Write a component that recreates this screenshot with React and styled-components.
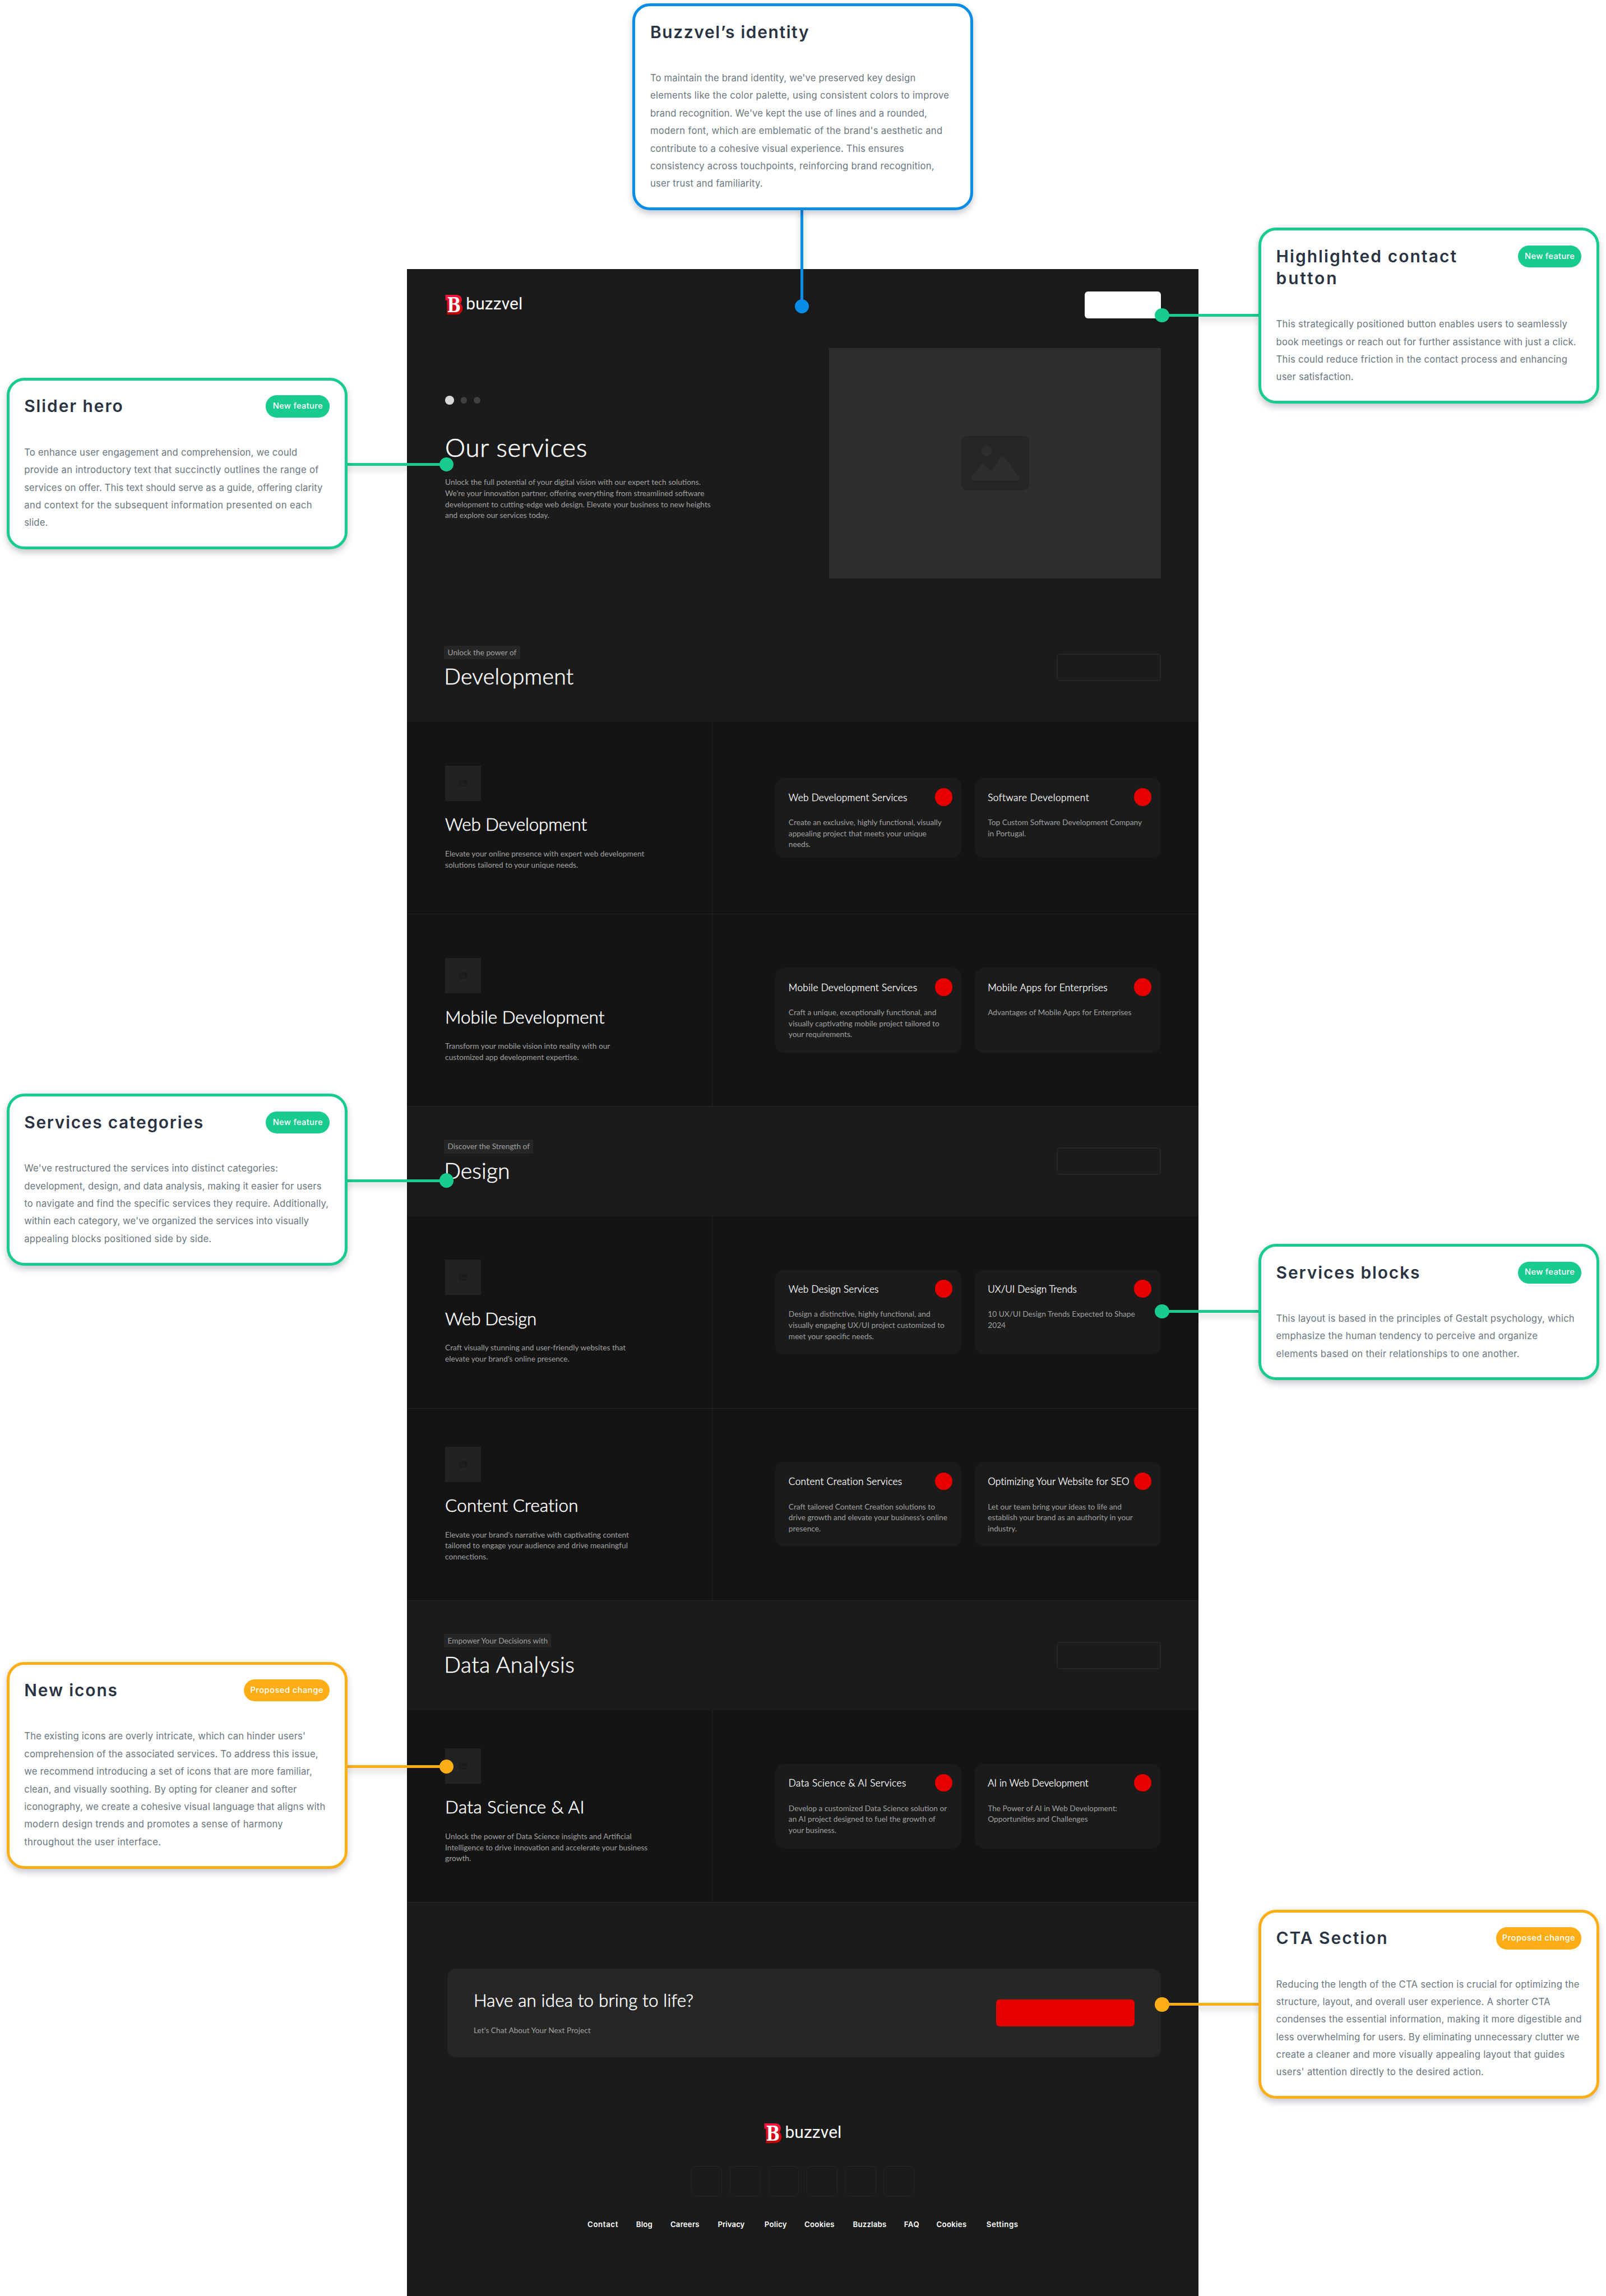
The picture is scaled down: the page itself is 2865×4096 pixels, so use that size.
import React, { useLayoutEffect, useRef } from "react";
import styled, { createGlobalStyle } from "styled-components";

const SCALE = 0.9804;
const u = (n) => `${+(n * SCALE).toFixed(3)}px`;

const ui = `Inter, "Open Sans", sans-serif`;
const body = `Lato, Carlito, "Open Sans", sans-serif`;

const GlobalStyle = createGlobalStyle`
  *, *::before, *::after { box-sizing: border-box; }
  body { margin: 0; background: #fff; font-family: ${body}; overflow: hidden; }
  h1, h2, h3, h4, p { margin: 0; font-weight: inherit; }
`;

/* One line of text, tracked so that it sets to the given measure. */
const LineBox = styled.span`
  display: block;
  width: max-content;
  white-space: nowrap;
`;

function Line({ w, children }) {
  const ref = useRef(null);
  useLayoutEffect(() => {
    const el = ref.current;
    el.style.letterSpacing = "0px";
    const natural = el.getBoundingClientRect().width;
    const count = el.textContent.length;
    el.style.letterSpacing = `${(w * SCALE - natural) / count}px`;
  }, [w, children]);
  return <LineBox ref={ref}>{children}</LineBox>;
}

const Lines = ({ of }) => of.map(([text, w]) => <Line key={text} w={w}>{text}</Line>);

const Canvas = styled.main`
  position: relative;
  width: ${u(2922)};
  height: ${u(4178)};
  padding: ${u(490)} 0 0 ${u(741)};
  overflow: hidden;
`;

const Page = styled.div`
  width: ${u(1440)};
  height: ${u(3700)};
  background: #1b1b1b;
  color: #fff;
`;

const Nav = styled.header`
  display: flex;
  align-items: center;
  justify-content: space-between;
  height: ${u(49)};
  margin: 0 ${u(69)};
`;

const NavSpace = styled.div`
  padding-top: ${u(40)};
`;

const Button = styled.div`
  flex: none;
  width: ${(p) => u(p.$w)};
  height: ${(p) => u(p.$h || 49)};
  border-radius: ${u(6)};
  background: ${(p) => p.$bg || "transparent"};
  border: ${(p) => (p.$outline ? "2px solid #262626" : "none")};
`;

const LogoBox = styled.div`
  display: flex;
  align-items: center;
  gap: ${u(5)};
  height: ${u(36)};
`;

const LogoMark = styled.svg`
  width: ${u(33)};
  height: ${u(36)};
  overflow: visible;
`;

const LogoText = styled.span`
  padding-bottom: ${u(4.5)};
  font: 400 ${u(30.5)}/${u(38)} Roboto, sans-serif;
  color: #fff;
`;

function Logo() {
  return (
    <LogoBox>
      <LogoMark viewBox="0 0 33 36">
        <defs>
          <linearGradient id="mark" x1="0" y1="0" x2="0" y2="1">
            <stop offset="0" stopColor="#f5153f" />
            <stop offset="1" stopColor="#c00000" />
          </linearGradient>
        </defs>
        <path d="M.5 0H20c7 0 10.500 4 10.500 8.500 0 3-1 5.500-2.500 7.500 2.500 2 4 5 4 8.500C32 31 27 36 20 36H3.500V10H.5z" fill="url(#mark)" />
        <text x="3.6" y="31.5" fontFamily="DejaVu Serif" fontWeight="700" fontSize="38" textLength="25" lengthAdjust="spacingAndGlyphs" fill="#fff">B</text>
      </LogoMark>
      <LogoText><Line w={103}>buzzvel</Line></LogoText>
    </LogoBox>
  );
}

const Hero = styled.section`
  display: flex;
  justify-content: space-between;
  margin: ${u(54.4)} ${u(69)} ${u(62.6)};
  height: ${u(419)};
`;

const HeroCopy = styled.div`
  padding-top: ${u(87)};
`;

const Dots = styled.div`
  display: flex;
  align-items: center;
  gap: ${u(12)};
  height: ${u(16)};
`;

const Dot = styled.i`
  width: ${(p) => u(p.$active ? 16 : 12)};
  height: ${(p) => u(p.$active ? 16 : 12)};
  border-radius: 50%;
  background: ${(p) => (p.$active ? "#d9d9d9" : "#404040")};
`;

const HeroTitle = styled.h1`
  margin: ${u(49.6)} 0 ${u(25.5)};
  font: 300 ${u(46.5)}/${u(56)} ${body};
  -webkit-text-stroke: 0.7px #fff;
`;

const Copy = styled.p`
  font: 400 ${u(14)}/${u(20)} ${body};
  color: #a0a0a0;
  white-space: pre-line;
`;

const Placeholder = styled.div`
  display: flex;
  align-items: center;
  justify-content: center;
  flex: none;
  width: ${(p) => u(p.$w)};
  height: ${(p) => u(p.$h)};
  background: ${(p) => p.$bg};
  color: ${(p) => p.$ink};
`;

const Picture = styled.svg`
  width: ${(p) => u(p.$w)};
  height: auto;
`;

function ImagePlaceholder({ w, h, bg, ink, icon }) {
  return (
    <Placeholder $w={w} $h={h} $bg={bg} $ink={ink}>
      <Picture $w={icon} viewBox="0 0 125 100">
        <rect width="125" height="100" rx="13" fill="currentColor" />
        <circle cx="47" cy="28.5" r="9.5" fill={bg} />
        <path d="M19 75.500 38.500 51.500q1.800-2 3.600 0L52.500 62.500q2 2 4 0L74.500 38.500q2-2 4 0L106 75v4.500q0 2-2 2H20.500q-2 0-2-2z" fill={bg} />
      </Picture>
    </Placeholder>
  );
}

const SectionHead = styled.section`
  display: flex;
  align-items: center;
  justify-content: space-between;
  height: ${u(199)};
  padding: 0 ${u(69)} 0 ${u(67)};
`;

const Tag = styled.span`
  display: block;
  width: max-content;
  padding: 0 ${u(6.5)};
  background: #262626;
  color: #a0a0a0;
  font: 400 ${u(14)}/${u(25)} ${body};
`;

const SectionTitle = styled.h2`
  margin-top: ${u(6)};
  font: 300 ${u(40)}/${u(48)} ${body};
  -webkit-text-stroke: 0.6px #fff;
`;

const Row = styled.section`
  display: flex;
  height: ${u(350)};
  background: #141414;
  border-bottom: 1px solid #262626;
`;

const Service = styled.div`
  display: flex;
  flex-direction: column;
  justify-content: center;
  gap: ${u(24)};
  width: ${u(556)};
  padding-left: ${u(69)};
  border-right: 2px solid #1b1b1b;
`;

const ServiceTitle = styled.h3`
  font: 300 ${u(32)}/${u(38)} ${body};
  -webkit-text-stroke: 0.6px #fff;
`;

const Cards = styled.div`
  display: flex;
  align-items: center;
  gap: ${u(24)};
  padding-left: ${u(114)};
`;

const Card = styled.article`
  position: relative;
  width: ${u(338.5)};
  height: ${(p) => u(p.$h)};
  padding: ${u(24)};
  border-radius: ${u(16)};
  background: #1b1b1b;
`;

const CardTitle = styled.h4`
  margin-bottom: ${u(24.5)};
  font: 300 ${u(17.5)}/${u(22)} ${body};
  -webkit-text-stroke: 0.35px #fff;
`;

const Bullet = styled.i`
  position: absolute;
  top: ${u(18.5)};
  right: ${u(16.5)};
  width: ${u(32)};
  height: ${u(32)};
  border-radius: 50%;
  background: #e60000;
`;

const Cta = styled.section`
  display: flex;
  align-items: center;
  justify-content: space-between;
  height: ${u(162)};
  margin: ${u(120)} ${u(69)} ${u(120)} ${u(73)};
  padding: 0 ${u(48)};
  border-radius: ${u(16)};
  background: #262626;
`;

const CtaTitle = styled.h3`
  margin-bottom: ${u(25)};
  font: 300 ${u(32)}/${u(38)} ${body};
  -webkit-text-stroke: 0.6px #fff;
`;

const Footer = styled.footer`
  display: flex;
  flex-direction: column;
  align-items: center;
  gap: ${u(41)};
`;

const Socials = styled.div`
  display: flex;
  gap: ${u(14)};
`;

const Social = styled.i`
  width: ${u(56)};
  height: ${u(56)};
  border: 1px solid #262626;
  border-radius: ${u(8)};
`;

const Links = styled.nav`
  display: grid;
  grid-template-columns: ${[88.4, 62.4, 86.2, 85, 72.7, 88.3, 93, 59, 91, 58].map(u).join(" ")};
  font: 600 ${u(13.5)}/${u(20)} ${ui};
`;

/* Notes pinned over the page */
const Note = styled.aside`
  position: absolute;
  left: ${(p) => u(p.$x)};
  top: ${(p) => u(p.$y)};
  width: ${u(620)};
  padding: ${u(27)};
  border: 5px solid ${(p) => p.$color};
  border-radius: ${u(32)};
  background: #fff;
  box-shadow: 0 ${u(6)} ${u(12)} rgba(20, 30, 50, 0.24);
`;

const NoteHead = styled.div`
  display: flex;
  align-items: flex-start;
  justify-content: space-between;
  margin-bottom: ${u(48)};
`;

const NoteTitle = styled.h2`
  font: 600 ${u(30.5)}/${u(40)} ${ui};
  color: #2a3342;
`;

const NoteBody = styled.p`
  font: 400 ${u(17)}/${u(32)} ${ui};
  color: #6b7780;
`;

const Badge = styled.span`
  display: flex;
  align-items: center;
  justify-content: center;
  width: ${(p) => u(p.$w)};
  height: ${u(40)};
  border-radius: ${u(20)};
  background: ${(p) => p.$color};
  color: #fff;
  font: 500 ${u(15)}/${u(20)} ${ui};
`;

const Lead = styled.i`
  position: absolute;
  left: ${(p) => u(p.$x)};
  top: ${(p) => u(p.$y)};
  width: ${(p) => u(p.$w)};
  height: ${(p) => u(p.$h)};
  background: ${(p) => p.$color};
  box-shadow: 0 ${u(6)} ${u(12)} rgba(20, 30, 50, 0.24);
`;

const Pin = styled.i`
  position: absolute;
  left: ${(p) => u(p.$x - 13)};
  top: ${(p) => u(p.$y - 13)};
  width: ${u(26)};
  height: ${u(26)};
  border-radius: 50%;
  background: ${(p) => p.$color};
`;

const GREEN = "#18cb8f";
const AMBER = "#fdae16";
const BLUE = "#088de6";
const FEATURE = { text: "New feature", w: 116, tw: 91, color: GREEN };
const CHANGE = { text: "Proposed change", w: 156, tw: 133, color: AMBER };

const notes = [
  {
    x: 1151, y: 6.5, color: BLUE, side: "down", pin: 557.5,
    title: [["Buzzvel’s identity", 290]],
    lines: [
      ["To maintain the brand identity, we've preserved key design", 483],
      ["elements like the color palette, using consistent colors to improve", 544],
      ["brand recognition. We've kept the use of lines and a rounded,", 504],
      ["modern font, which are emblematic of the brand's aesthetic and", 532],
      ["contribute to a cohesive visual experience. This ensures", 462],
      ["consistency across touchpoints, reinforcing brand recognition,", 517],
      ["user trust and familiarity.", 205],
    ],
  },
  {
    x: 2290, y: 414.5, badge: FEATURE, side: "left", pin: 574,
    title: [["Highlighted contact", 330], ["button", 113]],
    lines: [
      ["This strategically positioned button enables users to seamlessly", 530],
      ["book meetings or reach out for further assistance with just a click.", 546],
      ["This could reduce friction in the contact process and enhancing", 530],
      ["user satisfaction.", 141],
    ],
  },
  {
    x: 12, y: 687.5, badge: FEATURE, side: "right", pin: 845.3,
    title: [["Slider hero", 181]],
    lines: [
      ["To enhance user engagement and comprehension, we could", 497],
      ["provide an introductory text that succinctly outlines the range of", 536],
      ["services on offer. This text should serve as a guide, offering clarity", 543],
      ["and context for the subsequent information presented on each", 524],
      ["slide.", 43],
    ],
  },
  {
    x: 12, y: 1990.5, badge: FEATURE, side: "right", pin: 2148.3,
    title: [["Services categories", 327]],
    lines: [
      ["We've restructured the services into distinct categories:", 462],
      ["development, design, and data analysis, making it easier for users", 541],
      ["to navigate and find the specific services they require. Additionally,", 554],
      ["within each category, we've organized the services into visually", 518],
      ["appealing blocks positioned side by side.", 341],
    ],
  },
  {
    x: 2290, y: 2263.5, badge: FEATURE, side: "left", pin: 2386.5,
    title: [["Services blocks", 263]],
    lines: [
      ["This layout is based in the principles of Gestalt psychology, which", 543],
      ["emphasize the human tendency to perceive and organize", 476],
      ["elements based on their relationships to one another.", 443],
    ],
  },
  {
    x: 12, y: 3024, badge: CHANGE, side: "right", pin: 3214.5,
    title: [["New icons", 171]],
    lines: [
      ["The existing icons are overly intricate, which can hinder users'", 512],
      ["comprehension of the associated services. To address this issue,", 535],
      ["we recommend introducing a set of icons that are more familiar,", 524],
      ["clean, and visually soothing. By opting for cleaner and softer", 496],
      ["iconography, we create a cohesive visual language that aligns with", 548],
      ["modern design trends and promotes a sense of harmony", 471],
      ["throughout the user interface.", 249],
    ],
  },
  {
    x: 2290, y: 3475, badge: CHANGE, side: "left", pin: 3647.4,
    title: [["CTA Section", 204]],
    lines: [
      ["Reducing the length of the CTA section is crucial for optimizing the", 552],
      ["structure, layout, and overall user experience. A shorter CTA", 499],
      ["condenses the essential information, making it more digestible and", 556],
      ["less overwhelming for users. By eliminating unnecessary clutter we", 552],
      ["create a cleaner and more visually appealing layout that guides", 525],
      ["users' attention directly to the desired action.", 378],
    ],
  },
];

const leads = {
  down: (n) => ({ $x: 1456.5, $y: 378, $w: 5, $h: n.pin - 378, px: 1459 }),
  left: (n) => ({ $x: 2114, $y: n.pin - 2.5, $w: 180, $h: 5, px: 2114.6 }),
  right: (n) => ({ $x: 628, $y: n.pin - 2.5, $w: 184, $h: 5, px: 812.3 }),
};

function PinnedNote({ note }) {
  const color = note.color || note.badge.color;
  const { px, ...lead } = leads[note.side](note);
  return (
    <>
      <Lead {...lead} $color={color} />
      <Pin $x={px} $y={note.pin} $color={color} />
      <Note $x={note.x} $y={note.y} $color={color}>
        <NoteHead>
          <NoteTitle><Lines of={note.title} /></NoteTitle>
          {note.badge && (
            <Badge $w={note.badge.w} $color={color}>
              <Line w={note.badge.tw}>{note.badge.text}</Line>
            </Badge>
          )}
        </NoteHead>
        <NoteBody><Lines of={note.lines} /></NoteBody>
      </Note>
    </>
  );
}

const sections = [
  {
    tag: "Unlock the power of", title: "Development", w: 236,
    rows: [
      {
        title: "Web Development", w: 258, cardHeight: 145,
        text: "Elevate your online presence with expert web development\nsolutions tailored to your unique needs.",
        cards: [
          ["Web Development Services", 216, "Create an exclusive, highly functional, visually\nappealing project that meets your unique\nneeds."],
          ["Software Development", 184, "Top Custom Software Development Company\nin Portugal."],
        ],
      },
      {
        title: "Mobile Development", w: 290, cardHeight: 153.5,
        text: "Transform your mobile vision into reality with our\ncustomized app development expertise.",
        cards: [
          ["Mobile Development Services", 234, "Craft a unique, exceptionally functional, and\nvisually captivating mobile project tailored to\nyour requirements."],
          ["Mobile Apps for Enterprises", 218, "Advantages of Mobile Apps for Enterprises"],
        ],
      },
    ],
  },
  {
    tag: "Discover the Strength of", title: "Design", w: 120,
    rows: [
      {
        title: "Web Design", w: 166, cardHeight: 153.5,
        text: "Craft visually stunning and user-friendly websites that\nelevate your brand's online presence.",
        cards: [
          ["Web Design Services", 164, "Design a distinctive, highly functional, and\nvisually engaging UX/UI project customized to\nmeet your specific needs."],
          ["UX/UI Design Trends", 162, "10 UX/UI Design Trends Expected to Shape\n2024"],
        ],
      },
      {
        title: "Content Creation", w: 243, cardHeight: 153.5,
        text: "Elevate your brand's narrative with captivating content\ntailored to engage your audience and drive meaningful\nconnections.",
        cards: [
          ["Content Creation Services", 207, "Craft tailored Content Creation solutions to\ndrive growth and elevate your business's online\npresence."],
          ["Optimizing Your Website for SEO", 258, "Let our team bring your ideas to life and\nestablish your brand as an authority in your\nindustry."],
        ],
      },
    ],
  },
  {
    tag: "Empower Your Decisions with", title: "Data Analysis", w: 238,
    rows: [
      {
        title: "Data Science & AI", w: 254, cardHeight: 153.5,
        text: "Unlock the power of Data Science insights and Artificial\nIntelligence to drive innovation and accelerate your business\ngrowth.",
        cards: [
          ["Data Science & AI Services", 214, "Develop a customized Data Science solution or\nan AI project designed to fuel the growth of\nyour business."],
          ["AI in Web Development", 183, "The Power of AI in Web Development:\nOpportunities and Challenges"],
        ],
      },
    ],
  },
];

const links = [
  ["Contact", 56], ["Blog", 30], ["Careers", 53], ["Privacy", 49], ["Policy", 41],
  ["Cookies", 55], ["Buzzlabs", 61], ["FAQ", 28], ["Cookies", 55], ["Settings", 58],
];

export default function App() {
  return (
    <Canvas>
      <GlobalStyle />
      <Page>
        <NavSpace>
          <Nav>
            <Logo />
            <Button $w={138} $bg="#fff" />
          </Nav>
        </NavSpace>
        <Hero>
          <HeroCopy>
            <Dots><Dot $active /><Dot /><Dot /></Dots>
            <HeroTitle><Line w={259}>Our services</Line></HeroTitle>
            <Copy>
              {"Unlock the full potential of your digital vision with our expert tech solutions.\nWe're your innovation partner, offering everything from streamlined software\ndevelopment to cutting-edge web design. Elevate your business to new heights\nand explore our services today."}
            </Copy>
          </HeroCopy>
          <ImagePlaceholder w={603} h={419} bg="#2e2e2e" ink="#262626" icon={125} />
        </Hero>
        {sections.map((s) => (
          <React.Fragment key={s.title}>
            <SectionHead>
              <div>
                <Tag>{s.tag}</Tag>
                <SectionTitle><Line w={s.w}>{s.title}</Line></SectionTitle>
              </div>
              <Button $w={189} $h={50} $outline />
            </SectionHead>
            {s.rows.map((r) => (
              <Row key={r.title}>
                <Service>
                  <ImagePlaceholder w={65} h={64} bg="#222222" ink="#1b1b1b" icon={14} />
                  <ServiceTitle><Line w={r.w}>{r.title}</Line></ServiceTitle>
                  <Copy>{r.text}</Copy>
                </Service>
                <Cards>
                  {r.cards.map(([title, w, text]) => (
                    <Card key={title} $h={r.cardHeight}>
                      <CardTitle><Line w={w}>{title}</Line></CardTitle>
                      <Bullet />
                      <Copy>{text}</Copy>
                    </Card>
                  ))}
                </Cards>
              </Row>
            ))}
          </React.Fragment>
        ))}
        <Cta>
          <div>
            <CtaTitle><Line w={400}>Have an idea to bring to life?</Line></CtaTitle>
            <Copy>Let's Chat About Your Next Project</Copy>
          </div>
          <Button $w={251.5} $bg="#e60000" />
        </Cta>
        <Footer>
          <Logo />
          <Socials>
            {[0, 1, 2, 3, 4, 5].map((i) => <Social key={i} />)}
          </Socials>
          <Links>
            {links.map(([text, w], i) => <Line key={i} w={w}>{text}</Line>)}
          </Links>
        </Footer>
      </Page>
      {notes.map((n) => <PinnedNote key={n.title[0][0]} note={n} />)}
    </Canvas>
  );
}
